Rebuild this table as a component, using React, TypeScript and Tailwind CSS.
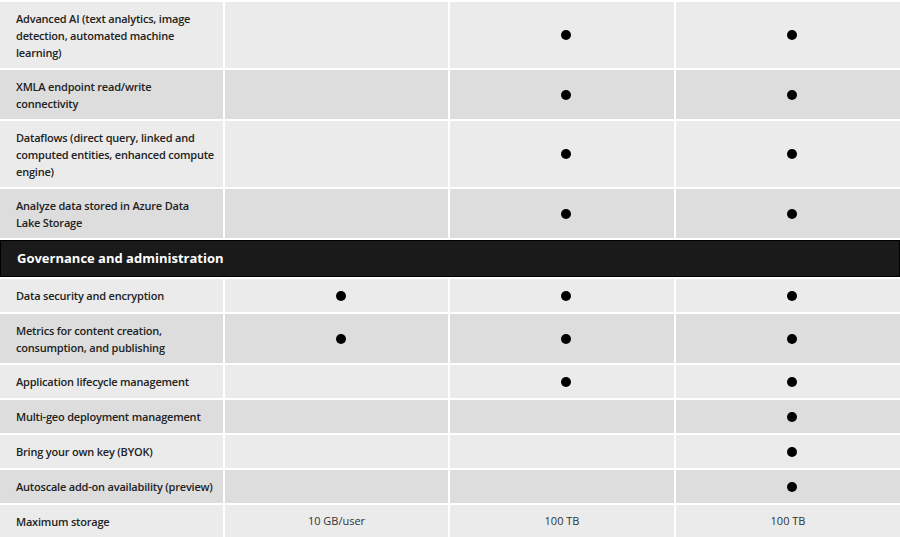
import React from "react";

type Row = { lines: string[]; cells: (boolean | string)[] };

const top: Row[] = [
  { lines: ["Advanced AI (text analytics, image", "detection, automated machine", "learning)"], cells: [false, true, true] },
  { lines: ["XMLA endpoint read/write", "connectivity"], cells: [false, true, true] },
  { lines: ["Dataflows (direct query, linked and", "computed entities, enhanced compute", "engine)"], cells: [false, true, true] },
  { lines: ["Analyze data stored in Azure Data", "Lake Storage"], cells: [false, true, true] },
];

const governance: Row[] = [
  { lines: ["Data security and encryption"], cells: [true, true, true] },
  { lines: ["Metrics for content creation,", "consumption, and publishing"], cells: [true, true, true] },
  { lines: ["Application lifecycle management"], cells: [false, true, true] },
  { lines: ["Multi-geo deployment management"], cells: [false, false, true] },
  { lines: ["Bring your own key (BYOK)"], cells: [false, false, true] },
  { lines: ["Autoscale add-on availability (preview)"], cells: [false, false, true] },
  { lines: ["Maximum storage"], cells: ["10 GB/user", "100 TB", "100 TB"] },
];

function Cells({ row, shade }: { row: Row; shade: string }) {
  return (
    <>
      <div
        className={`${shade} ${row.lines.length === 1 ? "pb-2" : "pb-[7px]"} pl-4 pt-2 text-[11px] leading-[17px] tracking-[-0.2px] font-semibold text-[#222] whitespace-nowrap`}
      >
        {row.lines.map((l) => (
          <div key={l}>{l}</div>
        ))}
      </div>
      {row.cells.map((c, i) => (
        <div key={i} className={`${shade} flex items-center justify-center`}>
          {c === true && <span className="ml-2 h-[10px] w-[10px] rounded-full bg-black" />}
          {typeof c === "string" && <span className="text-[11px] text-[#333]">{c}</span>}
        </div>
      ))}
    </>
  );
}

export default function App() {
  return (
    <div className="w-[900px] h-[537px] overflow-hidden bg-white pt-[2px]" style={{ fontFamily: '"Open Sans", "Noto Sans", sans-serif' }}>
      <div className="grid w-[898px] grid-cols-[223px_223px_224px_224px] gap-[2px]">
        {top.map((r, i) => (
          <Cells key={r.lines[0]} row={r} shade={i % 2 === 0 ? "bg-[#ebebeb]" : "bg-[#dddddd]"} />
        ))}
        <div className="col-span-4 bg-[#1a1a1a] border border-black pl-4 py-[9px] text-[13px] leading-[17px] font-bold text-white">
          Governance and administration
        </div>
        {governance.map((r, i) => (
          <Cells key={r.lines[0]} row={r} shade={i % 2 === 0 ? "bg-[#ebebeb]" : "bg-[#dddddd]"} />
        ))}
      </div>
    </div>
  );
}
